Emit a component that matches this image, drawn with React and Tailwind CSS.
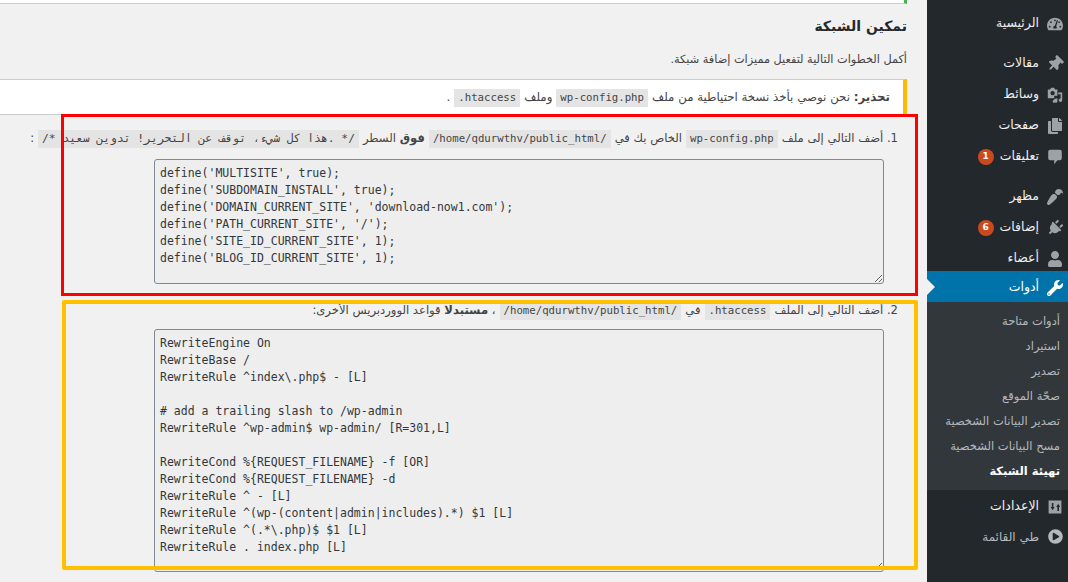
import {
  FaTachometerAlt,
  FaThumbtack,
  FaCopy,
  FaPaintBrush,
  FaPlug,
  FaUser,
  FaWrench,
  FaPlayCircle,
} from "react-icons/fa";

const arabic = '"DejaVu Sans", sans-serif';

function MediaIcon({ className }) {
  return (
    <svg viewBox="0 0 20 20" className={className} fill="currentColor" width="1em" height="1em">
      <path
        fillRule="evenodd"
        d="M1 3h3l1-2h4l1 2h3v8H9v3H1z M7 5a2.700 2.700 0 1 0 0.010 0z"
      />
      <path d="M14 7h5v9.500a2.200 2.200 0 1 1-2-2.200V9h-3z M9 15l4-1v3.700a1.800 1.800 0 1 1-1.500-1.700V16l-1 .300V18a1.700 1.700 0 1 1-1.500-1.600z" />
    </svg>
  );
}

function CommentIcon({ className }) {
  return (
    <svg viewBox="0 0 20 20" className={className} fill="currentColor" width="1em" height="1em">
      <path d="M4 1h12a2.500 2.500 0 0 1 2.500 2.500v8A2.500 2.500 0 0 1 16 14h-3l-4 5v-5H4a2.500 2.500 0 0 1-2.500-2.500v-8A2.500 2.500 0 0 1 4 1z" />
    </svg>
  );
}

function SettingsIcon({ className }) {
  return (
    <svg viewBox="0 0 20 20" className={className} fill="currentColor" width="1em" height="1em">
      <path
        fillRule="evenodd"
        d="M2 2h16v16H2z M6 5v5H4.500l2.500 4 2.500-4H8V5z M13 15v-5h-1.500L14 6l2.500 4H15v5z"
      />
    </svg>
  );
}

const menuTop = [
  { label: "مقالات", Icon: FaThumbtack, iconClass: "rotate-45" },
  { label: "وسائط", Icon: MediaIcon },
  { label: "صفحات", Icon: FaCopy },
  { label: "تعليقات", Icon: CommentIcon, badge: "1" },
];

const menuMid = [
  { label: "مظهر", Icon: FaPaintBrush, iconClass: "rotate-180" },
  { label: "إضافات", Icon: FaPlug, iconClass: "rotate-45", badge: "6" },
  { label: "أعضاء", Icon: FaUser },
];

const subItems = [
  "أدوات متاحة",
  "استيراد",
  "تصدير",
  "صحّة الموقع",
  "تصدير البيانات الشخصية",
  "مسح البيانات الشخصية",
];

const configCode = `define('MULTISITE', true);
define('SUBDOMAIN_INSTALL', true);
define('DOMAIN_CURRENT_SITE', 'download-now1.com');
define('PATH_CURRENT_SITE', '/');
define('SITE_ID_CURRENT_SITE', 1);
define('BLOG_ID_CURRENT_SITE', 1);`;

const htaccessCode = `RewriteEngine On
RewriteBase /
RewriteRule ^index\\.php$ - [L]

# add a trailing slash to /wp-admin
RewriteRule ^wp-admin$ wp-admin/ [R=301,L]

RewriteCond %{REQUEST_FILENAME} -f [OR]
RewriteCond %{REQUEST_FILENAME} -d
RewriteRule ^ - [L]
RewriteRule ^(wp-(content|admin|includes).*) $1 [L]
RewriteRule ^(.*\\.php)$ $1 [L]
RewriteRule . index.php [L]`;

function MenuRow({ label, Icon, badge, iconClass = "" }) {
  return (
    <div className="flex h-[31px] items-center pt-[2px] text-[12.5px] text-[#eeeeee]">
      <span className="flex w-[26px] shrink-0 justify-center text-[#9ca2a7]">
        <Icon className={`text-[16px] ${iconClass}`} />
      </span>
      <span className="mr-[3px] whitespace-nowrap">{label}</span>
      {badge && (
        <span className="mr-[6px] flex h-[16px] w-[16px] items-center justify-center rounded-full bg-[#ca4a1f] text-[9px] font-bold text-white">
          {badge}
        </span>
      )}
    </div>
  );
}

function Code({ children, size = "text-[10.7px]" }) {
  return (
    <code
      dir="ltr"
      className={`mx-[4px] inline-block bg-[#e4e4e4] px-[4px] py-[1px] leading-[16px] text-[#444] ${size}`}
      style={{ fontFamily: '"DejaVu Sans Mono", monospace', unicodeBidi: "embed" }}
    >
      {children}
    </code>
  );
}

function CodeBox({ value, height }) {
  return (
    <textarea
      readOnly
      dir="ltr"
      value={value}
      className={`mr-[14px] block w-[730px] resize-y overflow-hidden rounded-[3px] border border-[#7e8993] bg-[#eeeeee] px-[5px] pt-[5px] text-[11.5px] leading-[17px] text-[#32373c] ${height}`}
      style={{ fontFamily: '"DejaVu Sans Mono", monospace' }}
    />
  );
}

export default function App() {
  return (
    <div
      dir="rtl"
      className="relative flex h-[582px] w-[1068px] overflow-hidden bg-[#f1f1f1] text-[13px] text-[#444]"
      style={{ fontFamily: arabic }}
    >
      {/* Sidebar */}
      <aside className="h-full w-[141px] shrink-0 bg-[#23282d] pt-[7px]">
        <MenuRow label="الرئيسية" Icon={FaTachometerAlt} />
        <div className="mt-[9px]">
          {menuTop.map((item) => (
            <MenuRow key={item.label} {...item} />
          ))}
        </div>
        <div className="mt-[9px]">
          {menuMid.map((item) => (
            <MenuRow key={item.label} {...item} />
          ))}
        </div>
        <div className="relative -mt-[2px] flex h-[31px] items-center bg-[#0073aa] pt-[2px] text-[12.5px] text-white">
          <span className="flex w-[26px] shrink-0 justify-center">
            <FaWrench className="text-[16px]" />
          </span>
          <span className="mr-[3px]">أدوات</span>
          <span className="absolute left-0 top-[8px] h-0 w-0 border-y-[8px] border-l-[8px] border-y-transparent border-l-[#f1f1f1]"></span>
        </div>
        <div className="bg-[#32373c] pb-[6px] pt-[7px]">
          {subItems.map((item) => (
            <div key={item} className="flex h-[25px] items-center whitespace-nowrap pr-[8px] text-[11.5px] text-[#b4b9be]">
              {item}
            </div>
          ))}
          <div className="flex h-[25px] items-center whitespace-nowrap pr-[8px] text-[11.5px] font-bold text-white">
            تهيئة الشبكة
          </div>
        </div>
        <div className="flex h-[31px] items-center pt-[2px] text-[12.5px] text-[#eeeeee]">
          <span className="flex w-[26px] shrink-0 justify-center text-[#9ca2a7]">
            <SettingsIcon className="text-[16px]" />
          </span>
          <span className="mr-[3px]">الإعدادات</span>
        </div>
        <div className="flex h-[31px] items-center text-[12px] text-[#b4b9be]">
          <span className="flex w-[26px] shrink-0 justify-center text-[#b4b9be]">
            <FaPlayCircle className="text-[15px]" />
          </span>
          <span className="mr-[3px]">طي القائمة</span>
        </div>
      </aside>

      {/* Main */}
      <main className="min-w-0 flex-1 pr-[20px]">
        <div className="h-[4px] border-b border-r-[3px] border-b-[#cccccc] border-r-[#46b450] bg-white"></div>

        <h1 className="mt-[14px] text-[14px] font-bold leading-[17px] text-[#23282d]">تمكين الشبكة</h1>
        <p className="mt-[16px] text-[11.3px] leading-[17px]">أكمل الخطوات التالية لتفعيل مميزات إضافة شبكة.</p>

        <div className="mt-[11px] flex h-[36px] items-center border-y border-r-[4px] border-y-[#cccccc] border-r-[#ffb900] bg-white pr-[13px] pt-[2px] text-[11.8px]">
          <p className="whitespace-nowrap">
            <strong>تحذير:</strong> نحن نوصي بأخذ نسخة احتياطية من ملف
            <Code>wp-config.php</Code>
            وملف
            <Code>.htaccess</Code>.
          </p>
        </div>

        <ol className="mr-[9px] mt-[14px] text-[11.6px]">
          <li>
            <p className="whitespace-nowrap leading-[19px]">
              1. أضف التالي إلى ملف
              <Code>wp-config.php</Code>
              الخاص بك في
              <Code>/home/qdurwthv/public_html/</Code>
              <strong>فوق</strong> السطر
              <Code size="text-[11.3px]">/* هذا كل شيء، توقف عن التحرير! تدوين سعيد. */</Code>:
            </p>
            <div className="mt-[11px]">
              <CodeBox value={configCode} height="h-[125px]" />
            </div>
          </li>
          <li className="mt-[17px]">
            <p className="whitespace-nowrap leading-[19px]">
              2. أضف التالي إلى الملف
              <Code>.htaccess</Code>
              في
              <Code>/home/qdurwthv/public_html/</Code>
              ، <strong>مستبدلًا</strong> قواعد الووردبريس الأخرى:
            </p>
            <div className="mt-[9px]">
              <CodeBox value={htaccessCode} height="h-[243px]" />
            </div>
          </li>
        </ol>
      </main>

      {/* Highlight boxes drawn over the screenshot */}
      <div className="pointer-events-none absolute left-[61px] top-[114px] h-[182px] w-[857px] border-[3px] border-[#ff0000]"></div>
      <div className="pointer-events-none absolute left-[62px] top-[300px] h-[270px] w-[856px] rounded-[2px] border-[4px] border-[#ffc000]"></div>
    </div>
  );
}
